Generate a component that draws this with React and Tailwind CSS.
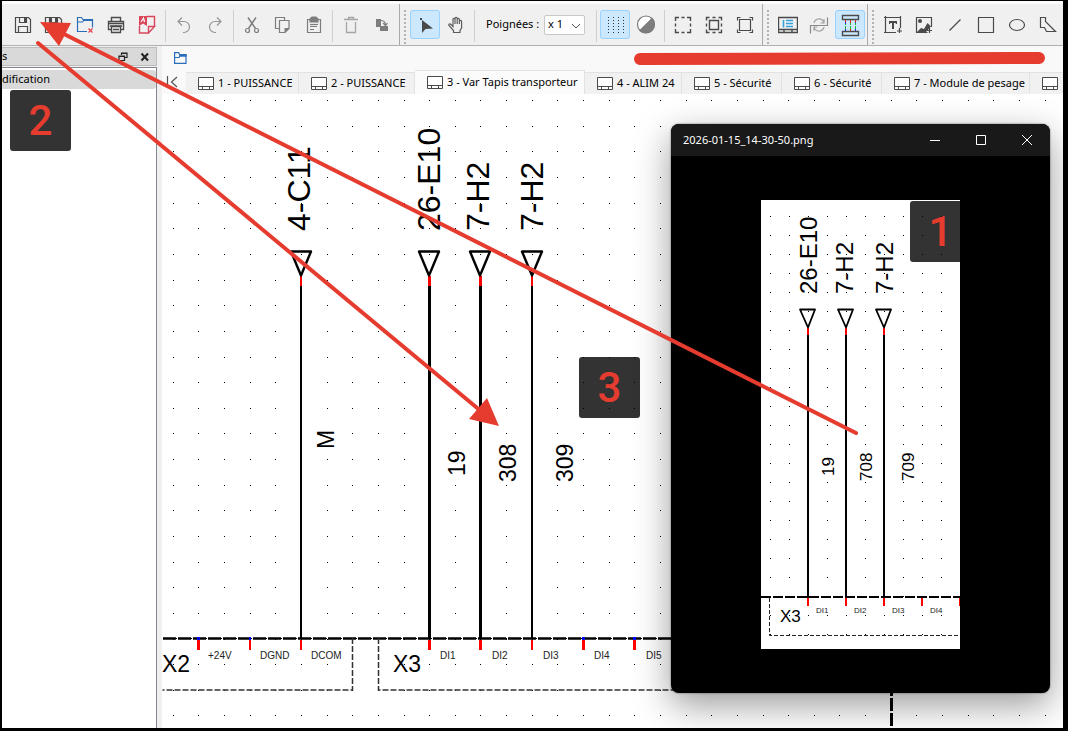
const RED = '#e63c2f';

function Icon({ children, color = '#4a4a4a' }) {
  return (
    <svg width="20" height="19" viewBox="0 0 20 19" fill="none" stroke={color} strokeWidth="1.2" className="shrink-0" aria-hidden="true">
      {children}
    </svg>
  );
}

const icons = {
  save: (
    <Icon>
      <path d="M2.5 2.5h13l2 2v13h-15z M5.5 17.5v-6h9v6 M6.5 2.5v5h7v-5" />
      <path d="M11 3h2v4h-2z" fill="#4a4a4a" stroke="none" />
    </Icon>
  ),
  saveAll: (
    <Icon>
      <path d="M1.5 2.5h14l2 2v13h-16z M4.5 17.5v-6h10v6 M5.5 2.5v5h8v-5" />
      <path d="M6 3h2v4h-2z M11 3h2v4h-2z" fill="#4a4a4a" stroke="none" />
    </Icon>
  ),
  closeFile: (
    <Icon color="#2a6db8">
      <path d="M12 16.5h-9.500v-14h4l1.500 2h9.500v8 M2.500 8.500v-1.500h5l1.500-2" />
      <path d="M9 4h8.500v2h-9.500z" fill="#2a6db8" stroke="none" />
      <path d="M13.500 13.500l4 4m0-4l-4 4" stroke="#e04050" />
    </Icon>
  ),
  print: (
    <Icon>
      <path d="M5.500 6.500v-4h9v4 M5.500 14.500h-3v-8h15v8h-3 M5.500 11.500h9v6h-9z" strokeWidth="1.4" />
      <path d="M3 8.500h14 M4 11h12 M7 14.500h6" strokeWidth="1.4" />
    </Icon>
  ),
  pdf: (
    <Icon color="#d9465a">
      <path d="M10 1.500h7.500v10 M2.500 11v7h9 M11.500 18v-6.500h6z" strokeWidth="1.4" />
      <path d="M2 1h8v10l-4-2.500l-4 2.500z" fill="#d9465a" stroke="none" />
      <path d="M4 7l2.500-4l1 4" stroke="#fff" />
    </Icon>
  ),
  undo: (
    <Icon color="#969696">
      <path d="M8 2.500l-4 4l4 4 M4 6.500h6a5.500 5.500 0 0 1 0 11h-1" />
    </Icon>
  ),
  redo: (
    <Icon color="#969696">
      <path d="M12 2.500l4 4l-4 4 M16 6.500h-6a5.500 5.500 0 0 0 0 11h1" />
    </Icon>
  ),
  cut: (
    <Icon color="#7d7d7d">
      <circle cx="5.500" cy="15.500" r="2" />
      <circle cx="14.500" cy="15.500" r="2" />
      <path d="M6.500 13.500l7.500-11 M13.500 13.500l-7.500-11" strokeWidth="1.5" />
    </Icon>
  ),
  copy: (
    <Icon color="#7d7d7d">
      <path d="M6 13.500h-3.500v-11h9v2.500 M6.500 5.500h9.500v8l-4 4h-5.500z" />
      <path d="M11.500 13h5l-5 5z" fill="#7d7d7d" stroke="none" />
    </Icon>
  ),
  paste: (
    <Icon color="#7d7d7d">
      <path d="M3.500 4.500h13v13h-13z M6 11.500h7 M6 14.500h4" />
      <path d="M6 4l2-2h4l2 2v3h-8z" fill="#7d7d7d" />
      <path d="M6 9.500h8" />
    </Icon>
  ),
  trash: (
    <Icon color="#a5a5a5">
      <path d="M3 4.500h14 M7.500 4.500v-2h5v2 M5.500 7v10.500h9v-10.500" strokeWidth="1.3" />
    </Icon>
  ),
  rotate: (
    <Icon color="#7d7d7d">
      <path d="M4 4h5v8h-5z M8 11h8v5h-8z" fill="#7d7d7d" stroke="none" />
      <path d="M9 5.500q4 0 4.500 4 M11 8l2.500 2.500l2-2.500" />
    </Icon>
  ),
  pointer: (
    <Icon>
      <path d="M7 5v13l3.500-4l7.500-.5z" fill="#4a4a4a" stroke="none" />
      <path d="M5 3h2v2h-2z" fill="#4a4a4a" stroke="none" />
    </Icon>
  ),
  hand: (
    <Icon color="#5c5c5c">
      <path d="M7.500 17.500v-2l-4.500-5c-1-1.500 1-2.200 2-1l2 2v-7c0-1.600 2-1.600 2 0v-1c0-1.600 2.200-1.600 2.200 0v1c0-1.500 2.200-1.500 2.200 0v2c0-1.500 2.200-1.500 2.200 0v6.500l-1.600 2.500v2z M9 4v5 M11.200 4v5 M13.400 5v4" />
    </Icon>
  ),
  grid: (
    <Icon color="#333">
      <path d="M3.500 2v17 M8.500 2v17 M13.500 2v17 M18.500 2v17" strokeWidth="1" strokeDasharray="1 2" />
    </Icon>
  ),
  contrast: (
    <Icon color="#7a7a7a">
      <circle cx="10" cy="9.500" r="8.500" fill="#fff" />
      <path d="M16 3.500a8.500 8.500 0 0 1-12 12z" fill="#7d7d7d" />
    </Icon>
  ),
  selectNone: (
    <Icon>
      <path d="M2.500 6v-3.500h3.500 M14 2.500h3.500v3.500 M17.500 14v3.500h-3.500 M6 17.500h-3.500v-3.500 M8.500 2.500h3 M8.500 17.500h3 M2.500 8.500v3 M17.500 8.500v3" strokeWidth="1.4" />
    </Icon>
  ),
  selectAll: (
    <Icon>
      <path d="M2.500 5.500v-3h3 M14.500 2.500h3v3 M17.500 14.500v3h-3 M5.500 17.500h-3v-3 M8.500 2.500h3 M8.500 17.500h3 M2.500 8.500v3 M17.500 8.500v3 M5.500 5.500h9v9h-9z" strokeWidth="1.4" />
    </Icon>
  ),
  selectInvert: (
    <Icon>
      <path d="M2.500 5.500v-3h3 M14.500 2.500h3v3 M17.500 14.500v3h-3 M5.500 17.500h-3v-3 M4.500 4.500h11v11h-11z" strokeWidth="1.2" />
    </Icon>
  ),
  titleBlock: (
    <Icon>
      <path d="M.5 2.500h19v15h-19z M.5 14.500h19 M6 14.500v3 M14 14.500v3" strokeWidth="1.4" />
      <path d="M5.500 5v7.500 M8 5.500h7 M8 8.500h7 M8 11.500h7" stroke="#35a3dc" strokeWidth="1.6" />
    </Icon>
  ),
  conductor: (
    <Icon color="#a0a0a0">
      <path d="M1.500 18.500v-8h17v-8" stroke="#8a8a8a" />
      <path d="M5 8a5 5 0 0 1 9-2l1 2m0-4v4h-3.500 M15 12a5 5 0 0 1-9 2l-1-2m0 4v-4h3.500" />
    </Icon>
  ),
  terminal: (
    <svg width="20" height="25" viewBox="0 0 20 25" fill="none" aria-hidden="true">
      <path d="M5.500 8v11 M10.500 8v11 M15.500 8v11" stroke="#19b52e" strokeDasharray="5 1" />
      <path d="M5.500 8v2 M10.500 8v3 M15.500 8v2 M10.500 17v2" stroke="#e22" />
      <path d="M5.500 10v2 M5.500 17v2 M15.500 10v1 M15.500 17v2" stroke="#22d" />
      <path d="M2.500 3.500h16v4h-16z M2.500 19.500h16v4h-16z" stroke="#4a4a4a" strokeWidth="1.4" />
    </svg>
  ),
  text: (
    <Icon>
      <path d="M1 2.500h17 M2.500 1v17 M1 17.500h12 M17.500 1v12 M16.500 13v5 M14 16h5" />
      <path d="M6 6h8v3h-1l-.5-1h-1.500v6h-2v-6h-1.500l-.5 1h-1z" fill="#4a4a4a" stroke="none" />
    </Icon>
  ),
  image: (
    <Icon>
      <path d="M17.500 12v-9.500h-15v15h11 M15.500 13v5 M13 15.500h5" />
      <circle cx="6" cy="6" r="2" fill="#4a4a4a" stroke="none" />
      <path d="M3 17l4-4l3 1l3.500-6l3.500 3.500l-5 5.500z" fill="#4a4a4a" stroke="none" />
    </Icon>
  ),
  line: <Icon><path d="M4.500 15.500l11-11" /></Icon>,
  rectangle: <Icon><path d="M2.500 2.500h15v15h-15z" /></Icon>,
  ellipse: <Icon><ellipse cx="10" cy="10" rx="7.500" ry="5.500" /></Icon>,
  polygon: <Icon><path d="M2.500 2.500h5v4l10 10h-9l-2-4h-4z" /></Icon>,
};

function Tool({ name, label, active }) {
  return (
    <button
      type="button"
      aria-label={label}
      aria-pressed={active}
      className={`flex h-[29px] w-[30px] shrink-0 items-center justify-center rounded-[3px] ${active ? 'bg-[#cce8ff] outline outline-[#99d1ff] -outline-offset-1' : ''}`}
    >
      {icons[name]}
    </button>
  );
}

function Separator() {
  return <div className="mx-0.5 h-8 w-px shrink-0 bg-[#cfcfcf]" />;
}

function ToolGroup({ children, handle = true, last }) {
  return (
    <div className={`flex shrink-0 items-start gap-px pt-1.5 pr-0.5 ${last ? '' : 'border-r border-[#a9a9a9]'}`}>
      {handle ? (
        <svg width="4" height="36" className="mr-0.5 ml-[3px] shrink-0" aria-hidden="true">
          <path d="M2 0v36" stroke="#b3b3b3" strokeWidth="2" strokeDasharray="2 2" />
        </svg>
      ) : null}
      {children}
    </div>
  );
}

function Toolbar() {
  return (
    <header className="flex h-[45px] shrink-0 overflow-hidden border-t-[3px] border-b border-t-[#fcfcfc] border-b-[#b0b0b0] bg-[#f0f0f0]">
      <div className="flex pl-1.5">
        <ToolGroup handle={false}>
          <Tool name="save" label="Enregistrer" />
          <Tool name="saveAll" label="Enregistrer sous" />
          <Tool name="closeFile" label="Fermer" />
          <Tool name="print" label="Imprimer" />
          <Tool name="pdf" label="Exporter en PDF" />
          <Separator />
          <Tool name="undo" label="Annuler" />
          <Tool name="redo" label="Refaire" />
          <Separator />
          <Tool name="cut" label="Couper" />
          <Tool name="copy" label="Copier" />
          <Tool name="paste" label="Coller" />
          <Separator />
          <Tool name="trash" label="Supprimer" />
          <Tool name="rotate" label="Pivoter" />
        </ToolGroup>
      </div>
      <ToolGroup>
        <Tool name="pointer" label="Mode sélection" active />
        <Tool name="hand" label="Mode visualisation" />
        <Separator />
        <div className="flex h-[29px] w-[115px] items-center pl-2">
          <label htmlFor="handles" className="w-[58px] text-[11px] whitespace-nowrap">Poignées :</label>
          <div className="relative flex">
            <select id="handles" className="h-5 w-[41px] appearance-none rounded-[2px] border border-[#c8c8c8] bg-white pb-0.5 pl-[3px] text-[11px] leading-none">
              <option>x 1</option>
              <option>x 2</option>
            </select>
            <svg width="10" height="6" className="pointer-events-none absolute top-2 right-1" aria-hidden="true">
              <path d="M1 1l4 4l4-4" fill="none" stroke="#555" />
            </svg>
          </div>
        </div>
        <Separator />
        <Tool name="grid" label="Afficher la grille" active />
        <Tool name="contrast" label="Couleur de fond" />
        <Separator />
        <Tool name="selectNone" label="Désélectionner tout" />
        <Tool name="selectAll" label="Tout sélectionner" />
        <Tool name="selectInvert" label="Inverser la sélection" />
      </ToolGroup>
      <ToolGroup>
        <Tool name="titleBlock" label="Propriétés du folio" />
        <Tool name="conductor" label="Réinitialiser les conducteurs" />
        <Tool name="terminal" label="Conducteurs automatiques" active />
      </ToolGroup>
      <ToolGroup last>
        <Tool name="text" label="Ajouter un texte" />
        <Tool name="image" label="Ajouter une image" />
        <Tool name="line" label="Ajouter une ligne" />
        <Tool name="rectangle" label="Ajouter un rectangle" />
        <Tool name="ellipse" label="Ajouter une ellipse" />
        <Tool name="polygon" label="Ajouter une polyligne" />
      </ToolGroup>
    </header>
  );
}

function SidePanel() {
  return (
    <aside className="flex w-[155px] shrink-0 flex-col pt-px">
      <div className="mb-px flex h-[19px] items-center justify-between border border-l-0 border-[#bdbdbd] bg-[#d9d9d9] pr-1.5">
        <span className="text-[11px]">s</span>
        <div className="flex gap-3">
          <button type="button" aria-label="Détacher">
            <svg width="10" height="10" fill="none" stroke="#222" strokeWidth="1.2" aria-hidden="true">
              <path d="M3.500 3v-2h5.500v4.500h-2 M1 4h5.500v4.500h-5.500z M3 1.500h6 M1 4.500h5" />
            </svg>
          </button>
          <button type="button" aria-label="Fermer le panneau">
            <svg width="10" height="10" fill="none" stroke="#222" strokeWidth="2" aria-hidden="true">
              <path d="M1.500 1.500l6.500 7m0-7l-6.500 7" />
            </svg>
          </button>
        </div>
      </div>
      <div className="flex-1 border-t border-r border-[#828790] bg-white pt-0.5">
        <div className="flex h-[19px] items-center rounded-r-[3px] bg-[#d9d9d9] text-[11px]">dification</div>
      </div>
    </aside>
  );
}

const tabs = [
  { title: '1 - PUISSANCE', width: 'w-[113px]' },
  { title: '2 - PUISSANCE', width: 'w-[116px]' },
  { title: '3 - Var Tapis transporteur', width: 'w-[170px]', active: true },
  { title: '4 - ALIM 24', width: 'w-[97px]' },
  { title: '5 - Sécurité', width: 'w-[100px]' },
  { title: '6 - Sécurité', width: 'w-[100px]' },
  { title: '7 - Module de pesage', width: 'w-[148px]' },
  { title: '', width: 'w-[100px]' },
];

function FolioTabs() {
  return (
    <nav className="flex h-6 shrink-0 items-end overflow-hidden bg-[#f9f9f9]">
      <button type="button" aria-label="Premier folio" className="flex h-6 w-6 shrink-0 items-center justify-center">
        <svg width="16" height="12" fill="none" stroke="#555" strokeWidth="1.2" aria-hidden="true">
          <path d="M1.500 0v12 M11 1l-5.500 5l5.500 5" />
        </svg>
      </button>
      {tabs.map((tab, i) => (
        <button
          key={i}
          type="button"
          aria-label={tab.title || 'Folio suivant'}
          className={`flex shrink-0 items-center gap-1 border border-b-0 border-l-0 border-[#e2e2e2] pl-3 text-[11px] whitespace-nowrap ${tab.width} ${tab.active ? 'h-6 bg-[#fbfbfb]' : 'h-[22px] bg-[#f1f1f1]'}`}
        >
          <svg width="16" height="13" fill="#fff" stroke="#4a4a4a" className="shrink-0" aria-hidden="true">
            <path d="M.5.5h15v12h-15z M.5 9.500h15 M4.500 9.500v3 M11.500 9.500v3" />
          </svg>
          {tab.title}
        </button>
      ))}
    </nav>
  );
}

function Dots({ x, y, step, cols, rows }) {
  const dots = [];
  for (let r = 0; r < rows; r++) {
    for (let c = 0; c < cols; c++) {
      dots.push(<rect key={`${r}-${c}`} x={Math.floor(x + c * step)} y={Math.floor(y + r * step)} width="1" height="1" />);
    }
  }
  return <g fill="#000">{dots}</g>;
}

function Vertical({ x, y, size, children }) {
  return (
    <text transform={`translate(${x} ${y}) rotate(-90)`} fontSize={size}>{children}</text>
  );
}

const wires = [
  { x: 300, w: 2, label: '4-C11', lx: 310, num: 'M', nx: 334, ny: 449 },
  { x: 428, w: 3, label: '26-E10', lx: 440, num: '19', nx: 465, ny: 476 },
  { x: 479, w: 3, label: '7-H2', lx: 489, num: '308', nx: 516, ny: 482 },
  { x: 531, w: 2, label: '7-H2', lx: 543, num: '309', nx: 573, ny: 482 },
];

const pins = [
  { x: 197, w: 3, name: '+24V', lx: 208, free: true },
  { x: 249, w: 2, name: 'DGND', lx: 260, free: true },
  { x: 300, w: 2, name: 'DCOM', lx: 311 },
  { x: 428, w: 3, name: 'DI1', lx: 440 },
  { x: 479, w: 3, name: 'DI2', lx: 492 },
  { x: 531, w: 2, name: 'DI3', lx: 543 },
  { x: 582, w: 3, name: 'DI4', lx: 594, free: true },
  { x: 633, w: 3, name: 'DI5', lx: 646, free: true },
];

function Schematic() {
  return (
    <svg className="h-full w-full font-['Liberation_Sans',sans-serif]">
      <g transform="translate(-162 -94)">
        <Dots x={173.3} y={100.6} step={25.64} cols={35} rows={25} />
        {/* terminal strip */}
        <path d="M163 638.500h728" stroke="#000" strokeWidth="2.400" strokeDasharray="13 2" />
        <path d="M163 638.500h728" stroke="#000" strokeWidth="1" strokeDasharray="14 1" />
        <path d="M891.500 638v92" stroke="#000" strokeWidth="3" strokeDasharray="13 2" />
        <path d="M352.500 638v52h-190 M378.500 638v52h500" fill="none" stroke="#333" strokeWidth="1.500" strokeDasharray="6 2" />
        {wires.map((wire) => (
          <g key={wire.x}>
            <rect x={wire.x} y="276" width={wire.w} height="362" />
            <rect x={wire.x} y="276" width={wire.w} height="10" fill="#f00" />
            <path d={`M${wire.x - 9} 251.500h20l-10 24z`} fill="none" stroke="#000" strokeWidth="2.400" strokeLinejoin="round" />
            <Vertical x={wire.lx} y={231} size={32}>{wire.label}</Vertical>
            <Vertical x={wire.nx} y={wire.ny} size={23}>{wire.num}</Vertical>
          </g>
        ))}
        {pins.map((pin) => (
          <g key={pin.x}>
            <rect x={pin.x} y="640" width={pin.w} height="10" fill="#f00" />
            {pin.free ? <rect x={pin.x} y="637" width={pin.w} height="3" fill="#00f" /> : null}
            <text x={pin.lx} y="659" fontSize="10" fill="#222">{pin.name}</text>
          </g>
        ))}
        <text x="162" y="672" fontSize="23">X2</text>
        <text x="393" y="672" fontSize="23">X3</text>
      </g>
    </svg>
  );
}

const shotWires = [
  { x: 46, label: '26-E10', lx: 56, num: '19', nx: 73, ny: 276 },
  { x: 84, label: '7-H2', lx: 92, num: '708', nx: 111, ny: 281 },
  { x: 122, label: '7-H2', lx: 132, num: '709', nx: 153, ny: 281 },
];

function Screenshot() {
  return (
    <svg width="199" height="449" className="block bg-white font-['Liberation_Sans',sans-serif]">
      <Dots x={9} y={16} step={19} cols={10} rows={23} />
      <path d="M0 397h199" stroke="#000" strokeWidth="2" strokeDasharray="10 2" />
      <path d="M8.500 398v37.500h191" fill="none" stroke="#222" strokeDasharray="4 2" />
      {shotWires.map((wire) => (
        <g key={wire.x}>
          <rect x={wire.x} y="128" width="2" height="270" />
          <rect x={wire.x} y="128" width="2" height="7" fill="#f00" />
          <path d={`M${wire.x - 7} 109.500h15l-7 18z`} fill="none" stroke="#000" strokeWidth="1.800" strokeLinejoin="round" />
          <Vertical x={wire.lx} y={94} size={24}>{wire.label}</Vertical>
          <Vertical x={wire.nx} y={wire.ny} size={17}>{wire.num}</Vertical>
        </g>
      ))}
      {['DI1', 'DI2', 'DI3', 'DI4', ''].map((name, i) => (
        <g key={i}>
          <rect x={46 + i * 38} y="398" width="2" height="8" fill="#f00" />
          <text x={55 + i * 38} y="413" fontSize="8" fill="#222">{name}</text>
        </g>
      ))}
      <text x="19" y="422" fontSize="17">X3</text>
    </svg>
  );
}

function Step({ children, className }) {
  return (
    <div className={`absolute flex size-[61px] items-center justify-center rounded-[3px] bg-black/80 font-['Roboto',sans-serif] text-[42px] leading-none font-medium text-[#e63c2f] ${className}`}>
      {children}
    </div>
  );
}

function Viewer() {
  return (
    <section className="absolute top-[124px] left-[671px] w-[379px] overflow-hidden rounded-lg bg-black shadow-[0_12px_36px_rgba(0,0,0,0.4),0_0_2px_rgba(0,0,0,0.6)]">
      <div className="flex h-8 items-center bg-[#191919] text-white">
        <h2 className="flex-1 pl-3 text-[11px]">2026-01-15_14-30-50.png</h2>
        <button type="button" aria-label="Réduire" className="flex h-8 w-[46px] items-center justify-center">
          <svg width="10" height="10" stroke="#fff" aria-hidden="true"><path d="M0 5.500h10" /></svg>
        </button>
        <button type="button" aria-label="Agrandir" className="flex h-8 w-[46px] items-center justify-center">
          <svg width="10" height="10" fill="none" stroke="#fff" aria-hidden="true"><path d="M.5.5h9v9h-9z" /></svg>
        </button>
        <button type="button" aria-label="Fermer" className="flex h-8 w-[46px] items-center justify-center">
          <svg width="10" height="10" stroke="#fff" aria-hidden="true"><path d="M0 0l10 10M10 0l-10 10" /></svg>
        </button>
      </div>
      <div className="px-[90px] pt-11 pb-11">
        <div className="relative overflow-hidden">
          <Screenshot />
          <Step className="top-px left-[149px]">1</Step>
        </div>
      </div>
    </section>
  );
}

function Arrows() {
  return (
    <svg className="pointer-events-none absolute inset-0 h-full w-full" fill={RED} stroke={RED} aria-hidden="true">
      <path d="M640 59l399-1" strokeWidth="12" strokeLinecap="round" />
      <path d="M60 32l796 401 M38 43l444 369" strokeWidth="4" strokeLinecap="round" />
      <path d="M40 22l31 1l-12 23z M499 426l-30-7l18-21z" stroke="none" />
    </svg>
  );
}

export default function App() {
  return (
    <div className="relative flex h-screen flex-col overflow-hidden bg-black pt-px pr-[5px] pb-[3px] pl-0.5 font-['Noto_Sans',sans-serif] text-black">
      <Toolbar />
      <div className="flex min-h-0 flex-1 gap-[5px] bg-[#f0f0f0]">
        <SidePanel />
        <main className="flex min-w-0 flex-1 flex-col bg-white">
          <div className="flex h-6 shrink-0 items-center bg-[#f9f9f9] pl-3">
            <svg width="13" height="12" fill="none" stroke="#2a6db8" strokeWidth="1.200" aria-label="Projet">
              <path d="M.6 11.400v-10.800h4l1 2h6.400v8.800z M.6 5.500h4.400l1-1.500h6" />
              <path d="M6 2.500h6v1.500h-6z" fill="#2a6db8" />
            </svg>
          </div>
          <FolioTabs />
          <div className="min-h-0 flex-1 overflow-hidden">
            <Schematic />
          </div>
        </main>
      </div>
      <Step className="top-[90px] left-2.5">2</Step>
      <Step className="top-[357px] left-[579px]">3</Step>
      <Viewer />
      <Arrows />
    </div>
  );
}
